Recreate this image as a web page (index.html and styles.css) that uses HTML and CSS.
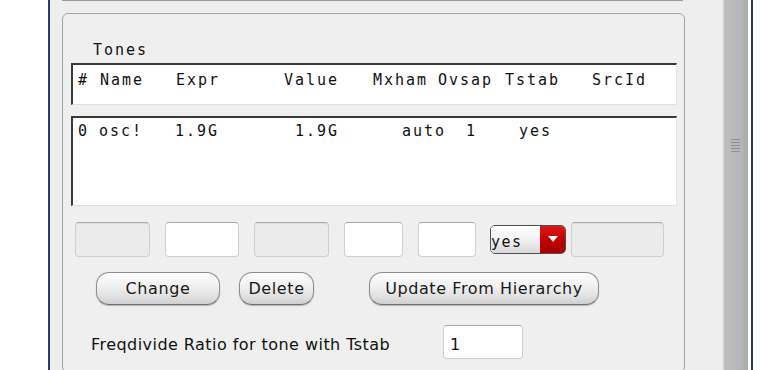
FILE: index.html
```html
<!DOCTYPE html>
<html>
<head>
<meta charset="utf-8">
<link rel="stylesheet" href="styles.css">
</head>
<body>
<div class="window">
  <div class="dialog">
    <div class="prev-box"></div>
    <div class="group">
      <div class="tones-label mono">Tones</div>
      <div class="list list-header mono">
        <div class="row header-row">
          <span>#</span><span>Name</span><span>Expr</span><span>Value</span><span>Mxham</span><span>Ovsap</span><span>Tstab</span><span>SrcId</span>
        </div>
      </div>
      <div class="list list-data mono">
        <div class="row data-row">
          <span>0</span><span>osc!</span><span>1.9G</span><span>1.9G</span><span>auto</span><span>1</span><span>yes</span>
        </div>
      </div>
      <div class="fields">
        <div class="fld dis w75"></div>
        <div class="fld w74"></div>
        <div class="fld dis w75"></div>
        <div class="fld w59"></div>
        <div class="fld w58"></div>
        <div class="combo">
          <div class="dd">
            <span class="dd-text mono">yes</span>
            <span class="dd-btn"><svg width="10" height="6" viewBox="0 0 10 6"><path d="M0 0H10L5 6Z" fill="#fff"/></svg></span>
          </div>
          <div class="fld dis w93"></div>
        </div>
      </div>
      <div class="buttons">
        <button class="btn b-change">Change</button>
        <button class="btn b-delete">Delete</button>
        <button class="btn b-update">Update From Hierarchy</button>
      </div>
      <div class="freq">
        <span class="freq-label">Freqdivide Ratio for tone with Tstab</span>
        <div class="fld freq-box">1</div>
      </div>
    </div>
  </div>
  <div class="scrollbar"><div class="grip"></div></div>
</div>
</body>
</html>
```
FILE: styles.css
```css
* { box-sizing: border-box; }
html, body { margin: 0; padding: 0; }
body {
  background: #ffffff;
  width: 761px;
  height: 370px;
  overflow: hidden;
  font-family: "DejaVu Sans", sans-serif;
  color: #111;
}
.mono {
  font-family: "DejaVu Sans Mono", monospace;
  font-size: 15px;
  letter-spacing: 2px;
  line-height: 16px;
}
.window {
  margin-left: 48px;
  width: 705px;
  height: 370px;
  display: flex;
  border-left: 2px solid #2b3d5e;
  box-shadow: inset 3px 0 0 #9db6d8;
  border-right: 2px solid #2b3d5e;
}
.dialog {
  width: 673px;
  height: 370px;
  background: #eeeeee;
  padding-left: 12px;
  overflow: hidden;
}
.prev-box {
  width: 621px;
  height: 1px;
  background: #9a9a9a;
}
.group {
  margin-top: 12px;
  width: 623px;
  height: 360px;
  border: 1px solid #a4a4a4;
  border-radius: 6px;
  padding: 28px 8px 0 8px;
  background: #efefef;
}
.tones-label {
  margin-left: 22px;
  height: 16px;
}
.list {
  width: 606px;
  background: #ffffff;
  border-top: 2px solid #3a3a3a;
  border-left: 2px solid #3a3a3a;
  border-right: 1px solid #e6e6e6;
  border-bottom: 1px solid #dedede;
  padding-left: 5px;
}
.list-header {
  margin-top: 5px;
  height: 42px;
  padding-top: 7px;
}
.list-data {
  margin-top: 11px;
  height: 90px;
  padding-top: 5px;
}
.row { display: grid; white-space: pre; }
.header-row { grid-template-columns: 22px 76px 108px 89px 65px 67px 87px auto; }
.data-row { grid-template-columns: 21px 76px 120px 107px 64px 53px auto; }
.fields {
  margin-top: 16px;
  display: flex;
  gap: 15px;
  padding-left: 4px;
  height: 35px;
}
.fld {
  height: 35px;
  background: #ffffff;
  border: 1px solid #cfcfcf;
  border-top-color: #a9a9a9;
  border-radius: 4px;
}
.fld.dis {
  background: #ebebeb;
  box-shadow: inset 0 1px 1px rgba(0,0,0,0.06);
}
.w75 { width: 75px; }
.w74 { width: 74px; }
.w59 { width: 59px; }
.w58 { width: 58px; }
.w93 { width: 93px; }
.combo { display: flex; gap: 5px; margin-left: -1px; }
.dd {
  margin-top: 3px;
  width: 76px;
  height: 29px;
  display: flex;
  border: 1px solid #505050;
  border-radius: 5px;
  overflow: hidden;
}
.dd-text {
  flex: 1;
  background: linear-gradient(#ffffff, #f2f2f2 50%, #d8d8d8);
  padding-top: 8px;
  padding-left: 0;
  letter-spacing: 1.5px;
}
.dd-btn {
  width: 25px;
  background: linear-gradient(#dc1a1a, #c40000 50%, #a80000);
  display: flex;
  align-items: center;
  justify-content: center;
  padding-bottom: 2px;
}
.buttons {
  margin-top: 15px;
  padding-left: 25px;
  display: flex;
  height: 33px;
}
.btn {
  height: 33px;
  margin: 0;
  padding: 0;
  border: 1px solid #8c8c8c;
  border-bottom-color: #6e6e6e;
  border-radius: 13px;
  background: linear-gradient(#fdfdfd, #f0f0f0 45%, #dedede 80%, #cfcfcf);
  box-shadow: 0 1px 1px rgba(0,0,0,0.25);
  font-family: "DejaVu Sans", sans-serif;
  font-size: 16px;
  letter-spacing: 0.6px;
  color: #1a1a1a;
}
.b-change { width: 124px; }
.b-delete { width: 75px; margin-left: 19px; }
.b-update { width: 230px; margin-left: 55px; }
.freq {
  margin-top: 20px;
  display: flex;
  padding-left: 20px;
}
.freq-label {
  font-size: 16px;
  letter-spacing: 0.45px;
  line-height: 20px;
  margin-top: 10px;
  width: 352px;
}
.freq-box {
  width: 80px;
  height: 34px;
  font-size: 16px;
  line-height: 20px;
  padding: 9px 0 0 6px;
}
.scrollbar {
  width: 25px;
  height: 370px;
  background: linear-gradient(to right, #d6d6d6, #bdbdbd 2px, #b6b6b6 70%, #a9a9a9);
  padding-top: 139px;
}
.grip {
  margin-left: 8px;
  width: 9px;
  height: 14px;
  background: repeating-linear-gradient(#8f8f8f 0, #8f8f8f 1px, transparent 1px, transparent 3px);
}
```
